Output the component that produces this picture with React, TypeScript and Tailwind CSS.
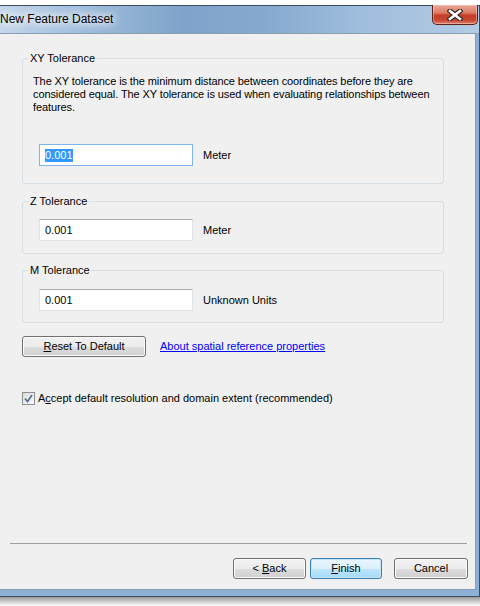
function CloseGlyph() {
  return (
    <svg width="16" height="12" viewBox="0 0 16 12">
      <path d="M3 2 L13 10 M13 2 L3 10" stroke="#3a2a28" strokeWidth="5" strokeLinecap="square" />
      <path d="M3 2 L13 10 M13 2 L3 10" stroke="#ffffff" strokeWidth="2.6" strokeLinecap="square" />
    </svg>
  );
}

function TitleBar() {
  return (
    <div className="h-[27px] flex justify-between bg-[linear-gradient(90deg,#c3d6ea_0%,#9dbcdc_18%,#7fa3ca_38%,#86a9cf_55%,#9fbddd_75%,#b3cbe3_100%)]">
      <div className="pt-[5px] text-[12px] leading-[16px] text-black [text-shadow:0_0_6px_#fff,0_0_10px_#fff,0_0_14px_#fff]">
        New Feature Dataset
      </div>
      <div className="-mt-[1px] mr-[1px] w-[46px] h-[20px] flex items-center justify-center rounded-b-[5px] border border-t-0 border-[#5b2118] bg-[linear-gradient(180deg,#e9a898_0%,#dc7d68_40%,#c43d26_55%,#c8472f_80%,#dc8470_100%)] shadow-[inset_0_0_0_1px_rgba(255,210,200,0.5)]">
        <CloseGlyph />
      </div>
    </div>
  );
}

function Field({ value, focused }: { value: string; focused?: boolean }) {
  return (
    <div
      className={
        focused
          ? "w-[154px] h-[22px] bg-white border border-[#7eb4ea] flex items-center pl-[5px]"
          : "w-[154px] h-[22px] bg-white border border-[#dfe3ea] border-t-[#abadb3] flex items-center pl-[5px]"
      }
    >
      {focused ? (
        <span className="bg-[#3399ff] text-white leading-[13px]">{value}</span>
      ) : (
        <span className="leading-[13px]">{value}</span>
      )}
    </div>
  );
}

function Group({
  title,
  className,
  children,
}: {
  title: string;
  className: string;
  children: React.ReactNode;
}) {
  return (
    <fieldset className={`ml-[22px] w-[422px] min-w-0 border border-[#d5dfe5] rounded-[3px] px-[10px] ${className}`}>
      <legend className="-ml-[5px] px-[2px] leading-[13px]">{title}</legend>
      {children}
    </fieldset>
  );
}

function WinButton({
  children,
  className,
  primary,
}: {
  children: React.ReactNode;
  className: string;
  primary?: boolean;
}) {
  return (
    <div
      className={`h-[21px] flex items-center justify-center rounded-[3px] border ${
        primary
          ? "border-[#3c7fb1] bg-[linear-gradient(180deg,#eaf6fd_0%,#d9f0fc_50%,#bee6fd_51%,#a7d9f5_100%)] shadow-[inset_0_0_0_1px_#c4e5f6]"
          : "border-[#707070] bg-[linear-gradient(180deg,#f2f2f2_0%,#ebebeb_50%,#dddddd_51%,#cfcfcf_100%)] shadow-[inset_0_0_0_1px_#fcfcfc]"
      } ${className}`}
    >
      {children}
    </div>
  );
}

export default function App() {
  return (
    <div className="w-[480px] h-[606px] bg-white overflow-hidden font-['Liberation_Sans',Arial,sans-serif] text-[11px] text-black">
      <div className="mt-[5px] h-[592px] flex flex-col bg-[#8fb0d5] border-t border-r border-b border-[#3b4c5f]">
        <TitleBar />
        <div className="flex-1 mr-[3px] bg-[#f0f0f0] border-t border-r border-b border-[#8a9db3] flex flex-col">
          <Group title="XY Tolerance" className="mt-[18px] pb-[17px]">
            <p className="mt-[10px] leading-[13px] whitespace-nowrap tracking-[-0.1px]">
              The XY tolerance is the minimum distance between coordinates before they are
              <br />
              considered equal. The XY tolerance is used when evaluating relationships between
              <br />
              features.
            </p>
            <div className="mt-[30px] ml-[6px] flex items-center gap-[10px]">
              <Field value="0.001" focused />
              <span>Meter</span>
            </div>
          </Group>

          <Group title="Z Tolerance" className="mt-[11px] pb-[12px]">
            <div className="mt-[11px] ml-[6px] flex items-center gap-[10px]">
              <Field value="0.001" />
              <span>Meter</span>
            </div>
          </Group>

          <Group title="M Tolerance" className="mt-[10px] pb-[11px]">
            <div className="mt-[12px] ml-[6px] flex items-center gap-[10px]">
              <Field value="0.001" />
              <span>Unknown Units</span>
            </div>
          </Group>

          <div className="mt-[13px] ml-[22px] flex items-center gap-[14px]">
            <WinButton className="w-[124px]">
              <span>
                <span className="underline">R</span>eset To Default
              </span>
            </WinButton>
            <a className="text-[#0000ff] underline">About spatial reference properties</a>
          </div>

          <div className="mt-[35px] ml-[22px] flex items-center gap-[3px]">
            <div className="w-[13px] h-[13px] border border-[#8e8f8f] bg-[linear-gradient(135deg,#dcdcdc,#fafafa)] flex items-center justify-center">
              <svg width="9" height="9" viewBox="0 0 9 9">
                <path d="M1 4.5 L3.5 7.5 L8 1" stroke="#5a6b8f" strokeWidth="1.7" fill="none" />
              </svg>
            </div>
            <span className="leading-[13px]">
              A<span className="underline">c</span>cept default resolution and domain extent (recommended)
            </span>
          </div>

          <div className="mt-auto ml-[10px] w-[457px] border-t border-[#a0a0a0]" />

          <div className="mt-[14px] mb-[10px] pr-[7px] flex justify-end">
            <WinButton className="w-[73px]">
              <span>
                &lt; <span className="underline">B</span>ack
              </span>
            </WinButton>
            <WinButton className="ml-[4px] w-[72px]" primary>
              <span>
                <span className="underline">F</span>inish
              </span>
            </WinButton>
            <WinButton className="ml-[12px] w-[74px]">Cancel</WinButton>
          </div>
        </div>
        <div className="h-[6px]" />
      </div>
      <div className="h-[9px] bg-[linear-gradient(180deg,#9a9a9a,#ffffff)]" />
    </div>
  );
}
